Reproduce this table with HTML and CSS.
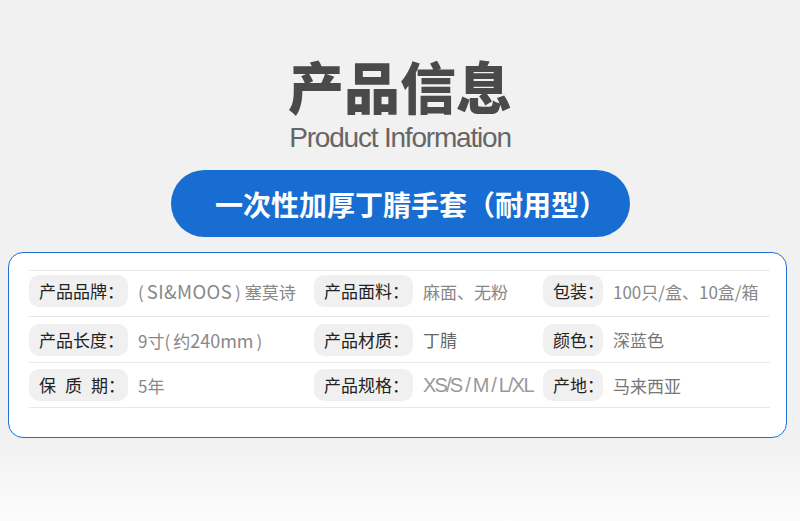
FILE: index.html
```html
<!DOCTYPE html>
<html>
<head>
    <meta charset="utf-8">
    <title>产品信息</title>
    <link rel="stylesheet" href="styles.css">
</head>
<body>
    <div class="page">
        <div class="page-title">
            <h1>产品信息</h1>
            <p class="subtitle">Product Information</p>
        </div>

        <div class="product-name">一次性加厚丁腈手套（耐用型）</div>

        <div class="spec-card">
            <!-- 参数表 -->
            <div class="spec-row first">
                <div class="spec-cell">
                    <span class="label">产品品牌：</span>
                    <span class="value"><span class="paren-l">(</span><span class="brand">SI&amp;MOOS</span><span class="paren-r">)</span>塞莫诗</span>
                </div>
                <div class="spec-cell">
                    <span class="label">产品面料：</span>
                    <span class="value">麻面、无粉</span>
                </div>
                <div class="spec-cell">
                    <span class="label short">包装：</span>
                    <span class="value">100只/盒、10盒/箱</span>
                </div>
            </div>
            <div class="spec-row">
                <div class="spec-cell">
                    <span class="label">产品长度：</span>
                    <span class="value">9寸<span class="paren-l">(</span>约<span class="num">240mm</span><span class="paren-r">)</span></span>
                </div>
                <div class="spec-cell">
                    <span class="label">产品材质：</span>
                    <span class="value dark">丁腈</span>
                </div>
                <div class="spec-cell">
                    <span class="label short">颜色：</span>
                    <span class="value mid">深蓝色</span>
                </div>
            </div>
            <div class="spec-row last">
                <div class="spec-cell">
                    <span class="label"><span class="spread">保质</span>期：</span>
                    <span class="value">5年</span>
                </div>
                <div class="spec-cell">
                    <span class="label">产品规格：</span>
                    <span class="value latin">XS/S / M / L/XL</span>
                </div>
                <div class="spec-cell">
                    <span class="label short">产地：</span>
                    <span class="value mid">马来西亚</span>
                </div>
            </div>
        </div>
    </div>
</body>
</html>
```

FILE: styles.css
```css
body {
    margin: 0;
    padding: 0;
    font-family: "Noto Sans CJK SC", "Noto Sans", sans-serif;
    background: linear-gradient(to bottom, #f1f1f1 0, #f1f1f1 440px, #fcfcfc 100%);
    min-height: 521px;
}

.page {
    width: 800px;
    padding-top: 57px;
}

.page-title {
    text-align: center;
}

.page-title h1 {
    margin: 0;
    font-size: 56px;
    line-height: 56px;
    font-weight: 900;
    color: #4a4a4a;
}

.subtitle {
    margin: 11px 0 0;
    font-family: "Liberation Sans", Arial, sans-serif;
    font-size: 28px;
    line-height: 28px;
    letter-spacing: -1.2px;
    color: #666;
}

.product-name {
    width: 459px;
    height: 67px;
    margin: 18px auto 0;
    border-radius: 34px;
    background: #176dd1;
    color: #fff;
    font-size: 28px;
    font-weight: 700;
    display: flex;
    align-items: center;
    justify-content: center;
    padding-left: 22px;
    box-sizing: border-box;
}

.spec-card {
    width: 779px;
    margin: 15px 0 0 8px;
    padding: 17px 16px 29px 20px;
    box-sizing: border-box;
    background: #fff;
    border: 1px solid #1f6fd4;
    border-radius: 15px;
}

.spec-row {
    display: grid;
    grid-template-columns: 285px 229px 1fr;
    align-items: center;
    height: 45px;
    border-top: 1px solid #e8e8e8;
}

.spec-row.first {
    padding-bottom: 5px;
    height: 40px;
}

.spec-row.last {
    height: 44px;
    border-bottom: 1px solid #e8e8e8;
}

.spec-cell {
    display: flex;
    align-items: center;
    gap: 10px;
}

.label {
    width: 99px;
    height: 32px;
    padding-left: 10px;
    box-sizing: border-box;
    background: #f0f0f0;
    border-radius: 10px;
    font-size: 17px;
    line-height: 32px;
    color: #222;
    white-space: nowrap;
}

.label.short {
    width: 60px;
}

.spread {
    letter-spacing: 9px;
}

.value {
    font-size: 17px;
    color: #888;
    white-space: nowrap;
}

.paren-l {
    margin-right: 3px;
}

.paren-r {
    margin: 0 4px 0 3px;
}

.brand {
    font-size: 18.5px;
    letter-spacing: 0.4px;
}

.num {
    font-size: 18px;
}

.value.dark {
    color: #666;
}

.value.mid {
    color: #777;
}

.value.latin {
    font-family: "Liberation Sans", Arial, sans-serif;
    font-size: 20px;
    letter-spacing: -1.8px;
    color: #999;
}
```
